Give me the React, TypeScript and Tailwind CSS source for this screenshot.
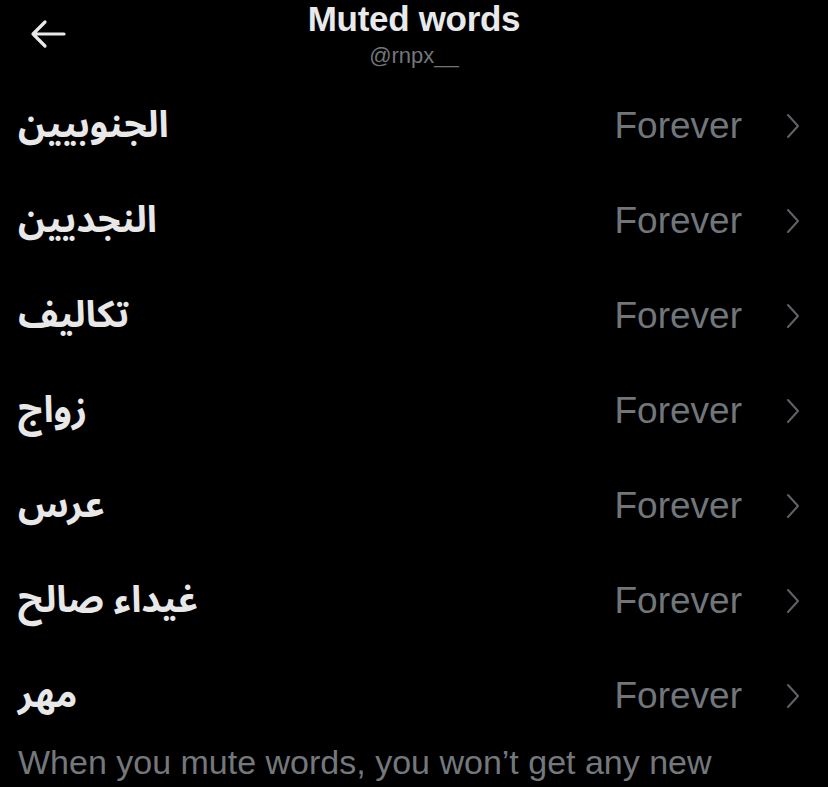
import React from "react";

const words = ["الجنوبيين", "النجديين", "تكاليف", "زواج", "عرس", "غيداء صالح", "مهر"];

function Chevron() {
  return (
    <svg width="14" height="26" viewBox="0 0 14 26" fill="none">
      <path d="M2 2 L12 13 L2 24" stroke="#5f6266" strokeWidth="2" strokeLinecap="round" strokeLinejoin="round" />
    </svg>
  );
}

export default function App() {
  return (
    <div className="w-[828px] h-[787px] bg-black overflow-hidden text-[#e7e9ea]" style={{ fontFamily: '"Liberation Sans", Arial, sans-serif' }}>
      <div className="relative h-[78px]">
        <div className="absolute left-[28px] top-[18px]">
          <svg width="40" height="32" viewBox="0 0 40 32" fill="none">
            <path d="M36 16 H5 M17 4 L5 16 L17 28" stroke="#e7e9ea" strokeWidth="3.2" strokeLinecap="round" strokeLinejoin="round" />
          </svg>
        </div>
        <div className="flex flex-col items-center">
          <div className="text-[35px] font-bold leading-[38px] tracking-[-0.3px]">Muted words</div>
          <div className="text-[22px] leading-[26px] text-[#71767b] mt-[5px]">@rnpx__</div>
        </div>
      </div>
      <div className="flex flex-col">
        {words.map((w) => (
          <div key={w} className="h-[95px] flex items-center pl-[18px] pr-[28px]">
            <div dir="rtl" className="text-[37px] font-bold leading-none text-[#e8e8e8]" style={{ fontFamily: '"Noto Sans Arabic", "DejaVu Sans", sans-serif' }}>{w}</div>
            <div className="flex-1" />
            <div className="text-[37px] text-[#71767b] leading-none mr-[44px]">Forever</div>
            <Chevron />
          </div>
        ))}
      </div>
      <div className="pl-[18px] text-[34px] text-[#74787c] leading-[36px] mt-[1px] whitespace-nowrap">
        When you mute words, you won’t get any new
      </div>
    </div>
  );
}
